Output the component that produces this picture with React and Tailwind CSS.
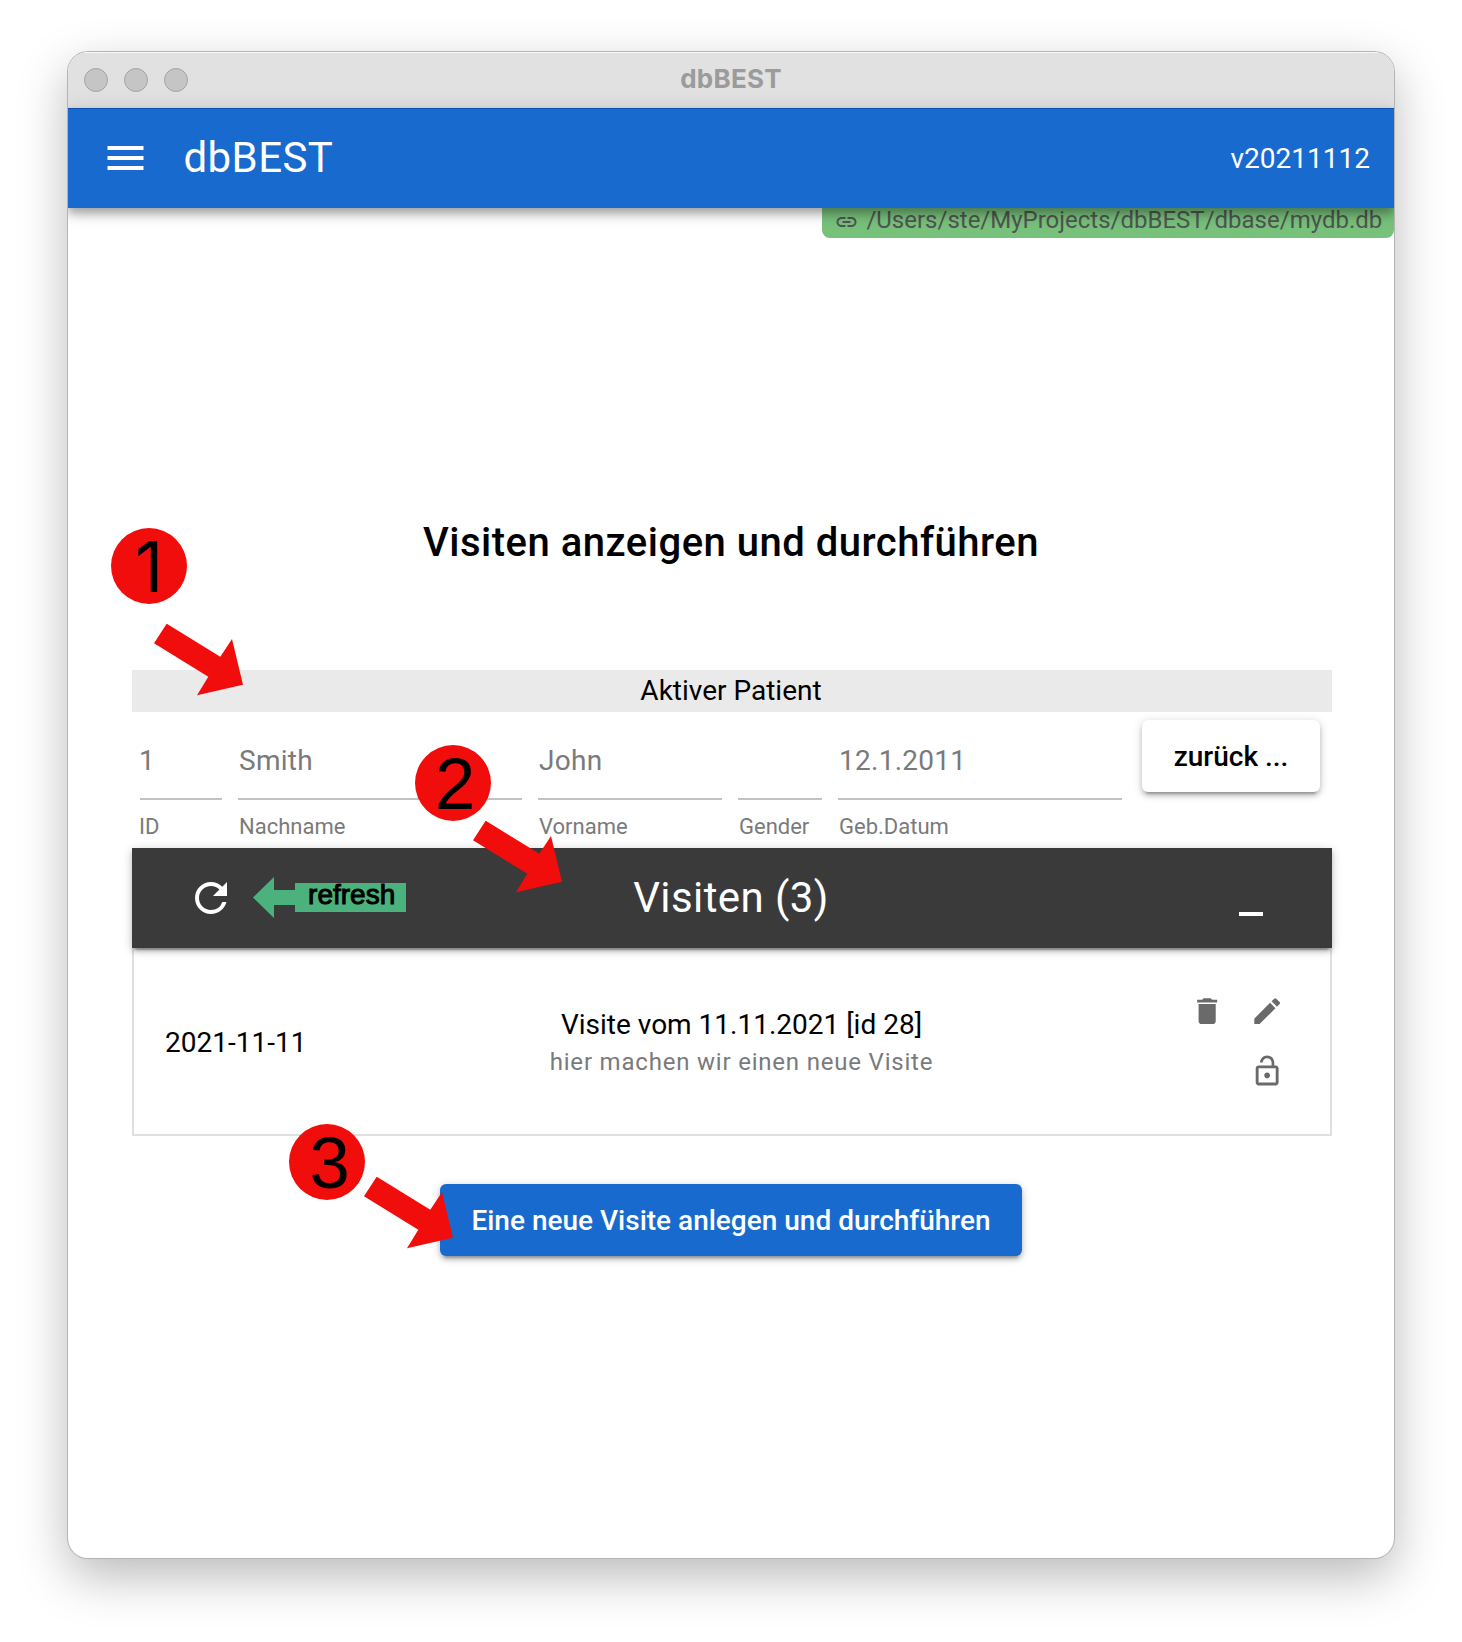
import React from "react";

function Icon({ d, className }) {
  return (
    <svg viewBox="0 0 24 24" fill="currentColor" className={className}>
      <path d={d} />
    </svg>
  );
}

const paths = {
  menu: "M3 18h18v-2H3v2zm0-5h18v-2H3v2zm0-7v2h18V6H3z",
  link: "M3.9 12c0-1.71 1.39-3.1 3.1-3.1h4V7H7c-2.76 0-5 2.24-5 5s2.24 5 5 5h4v-1.9H7c-1.71 0-3.1-1.39-3.1-3.1zM8 13h8v-2H8v2zm9-6h-4v1.9h4c1.71 0 3.1 1.39 3.1 3.1s-1.39 3.1-3.1 3.1h-4V17h4c2.76 0 5-2.24 5-5s-2.24-5-5-5z",
  refresh:
    "M17.65 6.35A7.958 7.958 0 0012 4c-4.42 0-7.99 3.58-7.99 8s3.57 8 7.99 8c3.73 0 6.84-2.55 7.73-6h-2.08A5.99 5.99 0 0112 18c-3.31 0-6-2.69-6-6s2.69-6 6-6c1.66 0 3.14.69 4.22 1.78L13 11h7V4l-2.35 2.35z",
  minimize: "M6 19h12v2H6z",
  trash: "M6 19c0 1.1.9 2 2 2h8c1.1 0 2-.9 2-2V7H6v12zM19 4h-3.5l-1-1h-5l-1 1H5v2h14V4z",
  edit: "M3 17.25V21h3.75L17.81 9.94l-3.75-3.75L3 17.25zM20.71 7.04a.996.996 0 000-1.41l-2.34-2.34a.996.996 0 00-1.41 0l-1.83 1.83 3.75 3.75 1.83-1.83z",
  unlock:
    "M12 17c1.1 0 2-.9 2-2s-.9-2-2-2-2 .9-2 2 .9 2 2 2zm6-9h-1V6c0-2.76-2.24-5-5-5S7 3.24 7 6h1.9c0-1.71 1.39-3.1 3.1-3.1s3.1 1.39 3.1 3.1v2H6c-1.1 0-2 .9-2 2v10c0 1.1.9 2 2 2h12c1.1 0 2-.9 2-2V10c0-1.1-.9-2-2-2zm0 12H6V10h12v10z",
};

function Field({ value, label, className, inset = "pl-px" }) {
  return (
    <div className={className}>
      <div className={"h-20 border-b-2 border-[#c2c2c2] pt-[21px] text-[28px] leading-[40px] tracking-[0.00937em] text-[#7a7a7a] " + inset}>
        {value}
      </div>
      <div className={"pt-[13px] text-[22px] leading-[28px] text-[#7a7a7a] " + inset}>{label}</div>
    </div>
  );
}

function Badge({ className, children }) {
  return (
    <div
      className={
        "absolute h-[75.5px] w-[75.5px] rounded-full bg-[#f20d0d] text-black " + className
      }
    >
      {children}
    </div>
  );
}

function Arrow({ className }) {
  return (
    <svg className={"absolute h-[72px] w-[90px] " + className} viewBox="0 0 90 72">
      <path d="M12.7 -0.3L66.3 32.7L78 15L89 60.7L43 71.3L54.3 52.7L0 19.3Z" fill="#f20d0d" />
    </svg>
  );
}

export default function App() {
  return (
    <div className="relative h-[1642px] w-[1462px] overflow-hidden bg-white pl-[68px] pt-[52px] font-['Roboto',sans-serif] text-black">
      <div className="h-[1506px] w-[1326px] overflow-hidden rounded-[20px] bg-white shadow-[0_0_0_1px_#b4b4b4,0_18px_50px_rgba(0,0,0,0.28)]">
        <header className="grid h-14 grid-cols-[1fr_auto_1fr] items-center border-t border-white/80 bg-[#e1e1e1]">
          <div className="flex gap-4 pb-px pl-4">
            <span className="h-6 w-6 rounded-full border border-[#a3a3a3] bg-[#c5c5c5]" />
            <span className="h-6 w-6 rounded-full border border-[#a3a3a3] bg-[#c5c5c5]" />
            <span className="h-6 w-6 rounded-full border border-[#a3a3a3] bg-[#c5c5c5]" />
          </div>
          <div className="pb-[3px] font-['Inter',sans-serif] text-[26px] font-bold leading-8 tracking-[0.01em] text-[#9b9b9b]">
            dbBEST
          </div>
        </header>

        <div className="relative z-10 flex h-[100px] items-center border-t border-[#0d4fae] bg-[#196ace] pl-[33px] pr-6 text-white shadow-[0_4px_8px_rgba(0,0,0,0.2),0_8px_10px_rgba(0,0,0,0.14),0_2px_20px_rgba(0,0,0,0.12)]">
          <Icon d={paths.menu} className="mb-px h-12 w-[49px]" />
          <div className="flex-1 pb-[2px] pl-[33.5px] text-[42px] leading-none tracking-[0.01em]">dbBEST</div>
          <div className="text-[28px]">v20211112</div>
        </div>

        <div className="ml-auto flex h-[30px] w-[572px] items-center rounded-b-lg bg-[#77c17b] pl-[12.4px] pb-[7px] text-2xl leading-6 text-[#505552]">
          <Icon d={paths.link} className="mt-[4px] h-6 w-[25px]" />
          <span className="whitespace-nowrap pl-[7px]">/Users/ste/MyProjects/dbBEST/dbase/mydb.db</span>
        </div>

        <h1 className="mt-[273px] text-center text-[40px] font-medium leading-[64px] tracking-[0.0125em]">
          Visiten anzeigen und durchführen
        </h1>

        <main className="ml-16 mt-[95px] w-[1200px]">
          <div className="h-[42px] bg-[#eaeaea] pr-[2px] text-center text-[28px] leading-[42px]">Aktiver Patient</div>
          <div className="flex h-[136px] gap-4 pl-2 pt-2">
            <Field className="w-[82px]" inset="-indent-px" value="1" label="ID" />
            <Field className="w-[284px]" value="Smith" label="Nachname" />
            <Field className="w-[184px]" value="John" label="Vorname" />
            <Field className="w-[84px]" value="" label="Gender" />
            <Field className="w-[284px]" value="12.1.2011" label="Geb.Datum" />
            <button className="ml-1 h-[72px] w-[178px] rounded-md bg-white pt-[2px] text-[28px] font-medium shadow-[0_2px_10px_rgba(0,0,0,0.2),0_4px_4px_rgba(0,0,0,0.14),0_6px_2px_-4px_rgba(0,0,0,0.2)]">
              zurück ...
            </button>
          </div>

          <div className="relative grid h-[100px] grid-cols-[1fr_auto_1fr] items-center bg-[#3a3a3a] text-white shadow-[0_2px_10px_rgba(0,0,0,0.2),0_4px_4px_rgba(0,0,0,0.14),0_6px_2px_-4px_rgba(0,0,0,0.2)]">
            <div className="flex items-center pl-[55px]">
              <Icon d={paths.refresh} className="h-12 w-12" />
              <svg className="mb-[2px] ml-[18px] h-[41px] w-[42px]" viewBox="0 0 42 41">
                <path d="M0 20.5L21 0V13H42V28H21V41Z" fill="#4cb27d" />
              </svg>
              <div className="mb-px h-[29px] w-[111.4px] bg-[#4cb27d] pl-[2px] text-center font-['Liberation_Sans',sans-serif] text-[28px] leading-[23px] text-black [-webkit-text-stroke:1px_black]">
                refresh
              </div>
            </div>
            <div className="-ml-px mr-px text-[42px] leading-none tracking-[0.01em]">Visiten (3)</div>
            <div className="flex justify-end pr-[57px]">
              <Icon d={paths.minimize} className="h-12 w-12" />
            </div>
          </div>

          <div className="flex h-[188px] items-center border-2 border-[#e0e0e0]">
            <div className="w-[240px] pl-[31px] pt-[2px] text-[28px]">2021-11-11</div>
            <div className="w-[735px] pt-[3px] text-center">
              <div className="text-[28px] leading-[38px]">Visite vom 11.11.2021 [id 28]</div>
              <div className="text-2xl leading-[37px] tracking-[0.0333em] text-[#7a7a7a]">
                hier machen wir einen neue Visite
              </div>
            </div>
            <div className="ml-[68px] grid grid-cols-2 pb-[2px] text-[#6a6a6a]">
              <div className="flex h-[60px] w-[60px] items-center justify-center">
                <Icon d={paths.trash} className="h-[34.3px] w-[34.3px]" />
              </div>
              <div className="flex h-[60px] w-[60px] items-center justify-center">
                <Icon d={paths.edit} className="h-[34.3px] w-[34.3px]" />
              </div>
              <div className="col-start-2 flex h-[60px] w-[60px] items-center justify-center">
                <Icon d={paths.unlock} className="h-[34.3px] w-[34.3px]" />
              </div>
            </div>
          </div>
        </main>

        <button className="mx-auto mt-12 block h-[72px] w-[582px] rounded-md bg-[#196ace] pt-[2px] text-[28px] font-medium text-white shadow-[0_2px_10px_rgba(0,0,0,0.2),0_4px_4px_rgba(0,0,0,0.14),0_6px_2px_-4px_rgba(0,0,0,0.2)]">
          Eine neue Visite anlegen und durchführen
        </button>
      </div>

      <Badge className="left-[111px] top-[528.2px] pl-[24px] font-['Inter',sans-serif] text-[69.5px] leading-[78px]">1</Badge>
      <Arrow className="left-[154px] top-[624px]" />
      <Badge className="left-[415.1px] top-[745.2px] pl-[20px] font-['Liberation_Sans',sans-serif] text-[72.5px] leading-[78px]">2</Badge>
      <Arrow className="left-[473px] top-[821px]" />
      <Badge className="left-[289.1px] top-[1124.2px] pl-[20.5px] font-['Liberation_Sans',sans-serif] text-[72.5px] leading-[78px]">3</Badge>
      <Arrow className="left-[364px] top-[1177px]" />
    </div>
  );
}
